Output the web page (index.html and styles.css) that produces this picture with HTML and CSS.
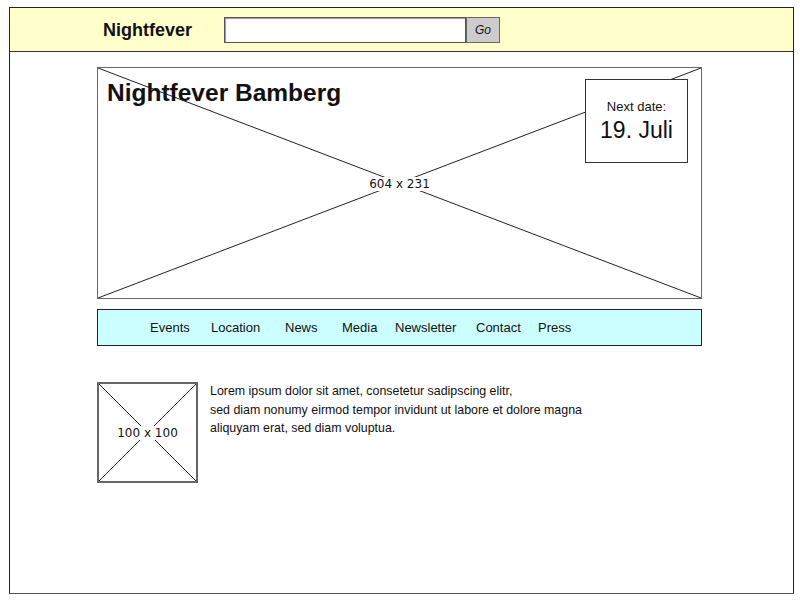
FILE: index.html
```html
<!DOCTYPE html>
<html>
<head>
<meta charset="utf-8">
<link rel="stylesheet" href="styles.css">
</head>
<body>
<div class="frame">
  <div class="topbar">
    <div class="brand">Nightfever</div>
    <div class="search">
      <div class="search-input"></div>
      <div class="search-btn">Go</div>
    </div>
  </div>
  <div class="main">
    <div class="hero">
      <svg class="xlines" viewBox="0 0 100 100" preserveAspectRatio="none">
        <line x1="0" y1="0" x2="100" y2="100" vector-effect="non-scaling-stroke"/>
        <line x1="0" y1="100" x2="100" y2="0" vector-effect="non-scaling-stroke"/>
      </svg>
      <div class="ph-label hero-label">604 x 231</div>
      <h1 class="hero-title">Nightfever Bamberg</h1>
      <div class="datebox">
        <div class="date-cap">Next date:</div>
        <div class="date-val">19. Juli</div>
      </div>
    </div>
    <nav class="nav">
      <span class="nav-item">Events</span>
      <span class="nav-item">Location</span>
      <span class="nav-item">News</span>
      <span class="nav-item">Media</span>
      <span class="nav-item">Newsletter</span>
      <span class="nav-item">Contact</span>
      <span class="nav-item">Press</span>
    </nav>
    <div class="content">
      <div class="thumb">
        <svg class="xlines" viewBox="0 0 100 100" preserveAspectRatio="none">
          <line x1="0" y1="0" x2="100" y2="100" vector-effect="non-scaling-stroke"/>
          <line x1="0" y1="100" x2="100" y2="0" vector-effect="non-scaling-stroke"/>
        </svg>
        <div class="ph-label">100 x 100</div>
      </div>
      <p class="text">Lorem ipsum dolor sit amet, consetetur sadipscing elitr,<br>sed diam nonumy eirmod tempor invidunt ut labore et dolore magna<br>aliquyam erat, sed diam voluptua.</p>
    </div>
  </div>
</div>
</body>
</html>
```

FILE: styles.css
```css
* { box-sizing: border-box; }
html, body { margin: 0; padding: 0; background: #fff; }
body {
  font-family: "Liberation Sans", Arial, sans-serif;
  color: #111;
}
.frame {
  margin: 7px 0 0 9px;
  width: 785px;
  height: 587px;
  border: 1px solid #222;
  border-bottom-color: #555;
}
.topbar {
  height: 44px;
  background: #ffffcc;
  border-bottom: 1px solid #333;
  display: flex;
  align-items: center;
  padding-left: 93px;
}
.brand {
  width: 121px;
  font-size: 18px;
  font-weight: bold;
  padding-top: 2px;
}
.search {
  display: flex;
  margin-top: 1px;
}
.search-input {
  width: 242px;
  height: 26px;
  background: #fff;
  border: 1px solid #555;
  box-shadow: inset 1px 1px 1px #999;
}
.search-btn {
  width: 34px;
  height: 26px;
  background: #cccccc;
  border: 1px solid #666;
  font-size: 12px;
  font-style: italic;
  display: flex;
  align-items: center;
  justify-content: center;
}
.main {
  padding: 15px 0 0 87px;
}
.hero {
  position: relative;
  width: 605px;
  height: 232px;
  border: 1px solid #666;
  padding: 13px 0 0 9px;
}
.xlines {
  position: absolute;
  left: 0;
  top: 0;
  width: 100%;
  height: 100%;
}
.xlines line {
  stroke: #222;
  stroke-width: 1;
}
.ph-label {
  position: absolute;
  left: 50%;
  top: 50%;
  transform: translate(-50%, -50%);
  background: #fff;
  font-family: "DejaVu Sans", sans-serif;
  font-size: 12px;
  line-height: 14px;
  padding: 0 1px;
  white-space: nowrap;
}
.hero-label { margin-top: 1px; }
.hero-title {
  position: relative;
  margin: 0;
  font-size: 24.5px;
  line-height: 24px;
  font-weight: bold;
  display: inline-block;
}
.datebox {
  position: absolute;
  top: 11px;
  right: 13px;
  width: 103px;
  height: 84px;
  background: #fff;
  border: 1px solid #333;
  text-align: center;
  padding-top: 19px;
}
.date-cap {
  font-size: 13px;
  line-height: 16px;
}
.date-val {
  font-size: 23px;
  line-height: 28px;
  margin-top: 1px;
}
.nav {
  margin-top: 10px;
  width: 605px;
  height: 37px;
  background: #ccffff;
  border: 1px solid #222;
  display: flex;
  align-items: center;
  padding-left: 52px;
  font-size: 13px;
}
.nav-item:nth-child(1) { width: 61px; }
.nav-item:nth-child(2) { width: 74px; }
.nav-item:nth-child(3) { width: 57px; }
.nav-item:nth-child(4) { width: 53px; }
.nav-item:nth-child(5) { width: 81px; }
.nav-item:nth-child(6) { width: 62px; }
.content {
  display: flex;
  margin-top: 36px;
}
.thumb {
  position: relative;
  width: 101px;
  height: 101px;
  border: 2px solid #666;
  flex: none;
}
.text {
  margin: 0 0 0 12px;
  font-size: 12.4px;
  line-height: 18.5px;
}
```
